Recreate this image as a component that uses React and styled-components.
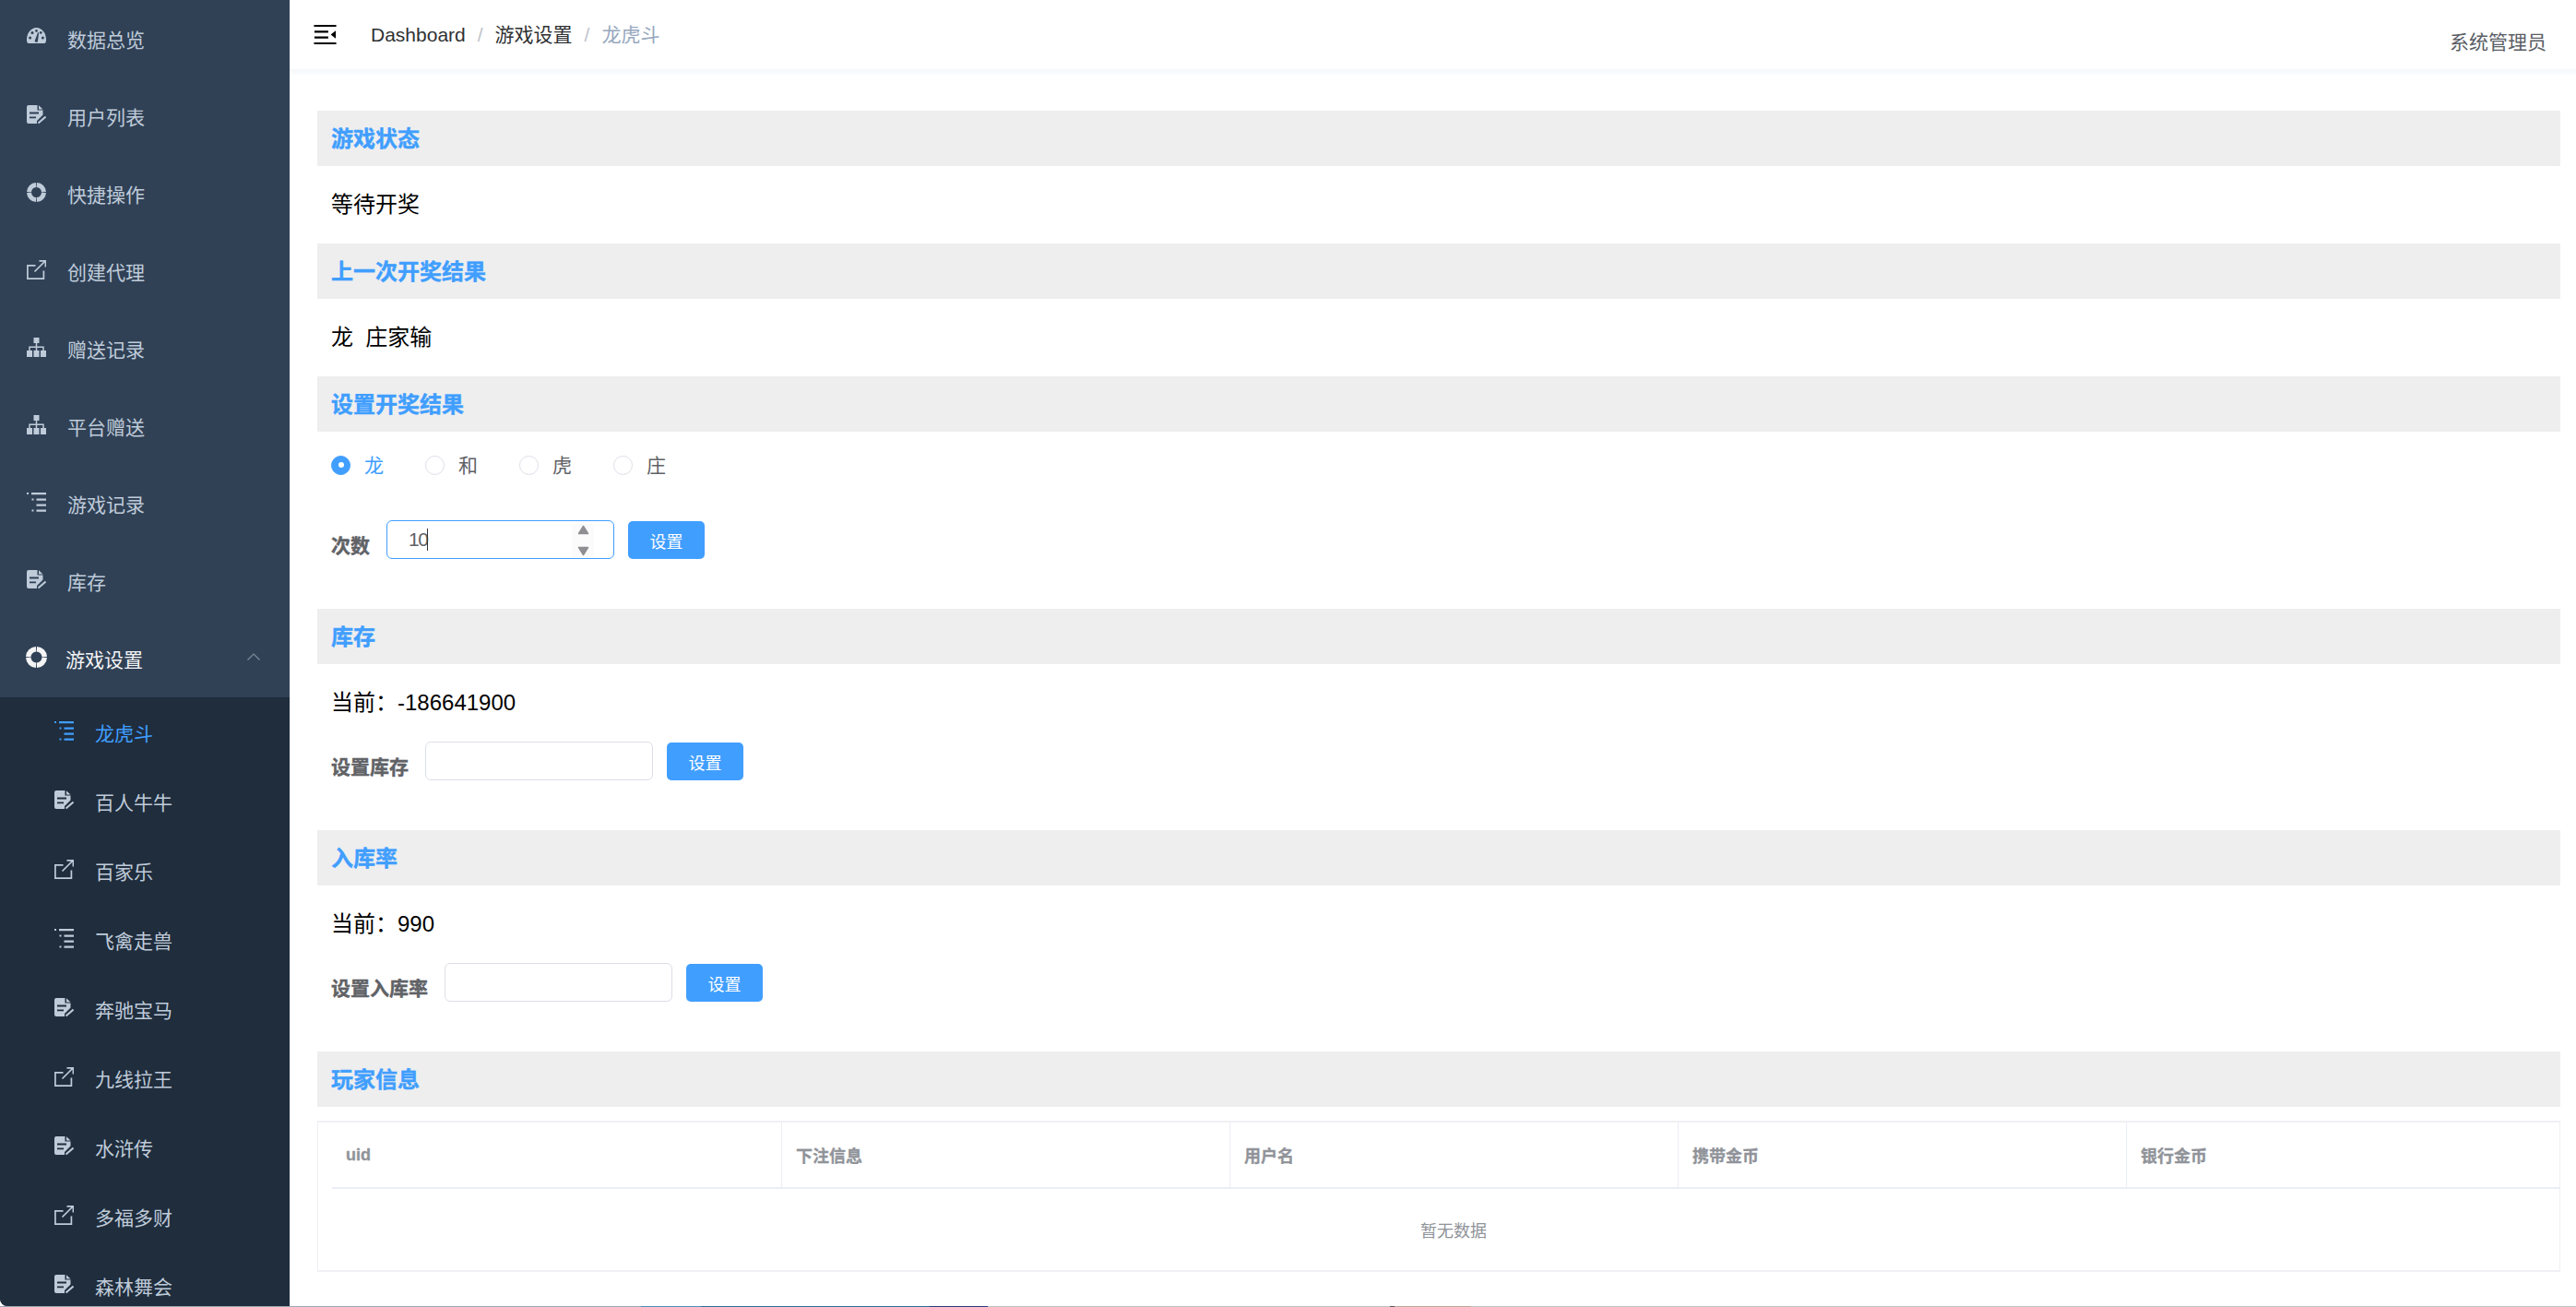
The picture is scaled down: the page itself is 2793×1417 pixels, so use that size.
import React from "react";
import styled, { createGlobalStyle } from "styled-components";

const FONT = `"Liberation Sans", "Noto Sans CJK SC", sans-serif`;

const Global = createGlobalStyle`
  html, body { margin: 0; padding: 0; background: #fff; overflow: hidden; }
  * { box-sizing: border-box; }
  body { font-family: ${FONT}; }
`;

const Page = styled.div`
  width: 2793px;
  height: 1417px;
  display: flex;
  flex-direction: column;
  background: #fff;
`;
const Window = styled.div`
  flex: 1;
  min-height: 0;
  display: flex;
  background: #fff;
`;
const DesktopStrip = styled.div`
  height: 1px;
  background: linear-gradient(to right,
    #9aa7b5 0, #9aa7b5 695px,
    #4a8fc0 695px, #4a8fc0 760px,
    #2d6ca0 760px, #2d6ca0 1008px,
    #2a3a80 1008px, #2a3a80 1071px,
    #c0c0c0 1071px, #c0c0c0 1507px,
    #555 1507px, #555 1512px,
    #b8aa98 1512px, #b8aa98 1595px,
    #c4c4c4 1595px, #c4c4c4 100%);
`;
const Sidebar = styled.nav`
  --nav-bg: #304156;
  width: 314px;
  flex: none;
  background: #304156;
  overflow: hidden;
  border-bottom-left-radius: 8px;
`;
const NavRow = styled.div`
  height: 84px;
  display: flex;
  align-items: center;
  padding-left: ${p => (p.$open ? 28 : 29)}px;
  gap: ${p => (p.$open ? 20 : 23)}px;
  color: ${p => (p.$open ? "#f4f4f5" : "#bfcbd9")};
  font-size: 21px;
  position: relative;
`;
const NavIcon = styled.svg`
  width: ${p => p.$size || 21}px;
  height: ${p => p.$size || 21}px;
  flex: none;
  margin-top: -3px;
  color: inherit;
`;
const NavLabel = styled.span`
  line-height: 30px;
  margin-top: 4px;
`;
const Chevron = styled.svg`
  position: absolute;
  left: 268px;
  top: 36px;
  width: 14px;
  height: 8px;
`;
const SubMenu = styled.div`
  --nav-bg: #1f2d3d;
  background: #1f2d3d;
`;
const SubRow = styled.div`
  height: 75px;
  display: flex;
  align-items: center;
  padding-left: 59px;
  gap: 23px;
  font-size: 21px;
  color: ${p => (p.$active ? "#409eff" : "#bfcbd9")};
`;
const Main = styled.main`
  flex: 1;
  min-width: 0;
`;
const Header = styled.header`
  height: 75px;
  display: flex;
  align-items: center;
  padding-left: 25px;
  position: relative;
  &::after {
    content: "";
    position: absolute;
    left: 0;
    right: 0;
    top: 75px;
    height: 6px;
    background: linear-gradient(to bottom, #f5f7fa, #fbfcfd);
  }
`;
const Hamburger = styled.svg`
  width: 27px;
  height: 27px;
  transform: rotate(180deg);
  flex: none;
  margin-right: 36px;
  margin-top: -1px;
`;
const Crumbs = styled.div`
  display: flex;
  align-items: center;
  font-size: 21px;
  color: #303133;
  line-height: 30px;
`;
const Crumb = styled.span`
  color: ${p => (p.$last ? "#97a8be" : "#303133")};
`;
const Sep = styled.span`
  color: #c0c4cc;
  margin: 0 13px;
  font-size: 21px;
`;
const UserName = styled.div`
  margin-left: auto;
  margin-right: 32px;
  margin-top: 12px;
  font-size: 21px;
  color: #5a5e66;
`;
const Content = styled.div`
  padding: 45px 17px 0 30px;
`;
const SectionBar = styled.h2`
  margin: 0;
  height: 60px;
  background: #eeeeee;
  display: flex;
  align-items: center;
  padding: 0 0 3px 15px;
  font-size: 24px;
  font-weight: 700;
  color: #409eff;
  -webkit-text-stroke: 0.4px #409eff;
`;
const StatusLine = styled.div`
  height: 84px;
  display: flex;
  align-items: center;
  padding: 0 0 6px 15px;
  font-size: 24px;
  color: #000;
  white-space: pre;
`;
const RadioGroup = styled.div`
  height: 72px;
  margin-bottom: 24px;
  display: flex;
  align-items: center;
  padding-left: 15px;
`;
const RadioItem = styled.label`
  width: 102px;
  display: flex;
  align-items: center;
  gap: 15px;
  font-size: 21px;
  color: ${p => (p.$checked ? "#409eff" : "#606266")};
`;
const RadioText = styled.span`
  margin-top: -2px;
`;
const RadioDot = styled.span`
  width: 21px;
  height: 21px;
  border-radius: 50%;
  flex: none;
  display: flex;
  align-items: center;
  justify-content: center;
  border: 1.5px solid ${p => (p.$checked ? "#409eff" : "#dcdfe6")};
  background: ${p => (p.$checked ? "#409eff" : "#fff")};
  &::after {
    content: "";
    width: 6px;
    height: 6px;
    border-radius: 50%;
    background: ${p => (p.$checked ? "#fff" : "transparent")};
  }
`;
const FormRow = styled.div`
  height: 42px;
  margin-bottom: 54px;
  padding-left: 15px;
  display: flex;
  align-items: flex-end;
`;
const FieldLabel = styled.span`
  font-size: 21px;
  font-weight: 700;
  color: #606266;
  -webkit-text-stroke: 0.4px #606266;
  line-height: 30px;
  margin-right: 18px;
  margin-bottom: -1px;
`;
const FieldWrap = styled.div`
  position: relative;
  width: 247px;
  height: 42px;
  margin-right: 15px;
`;
const Field = styled.input`
  width: 100%;
  height: 100%;
  border: 1.5px solid ${p => (p.$focus ? "#409eff" : "#dcdfe6")};
  border-radius: 6px;
  outline: none;
  padding: 0 23px;
  font-family: ${FONT};
  font-size: 21px;
  letter-spacing: -1.5px;
  color: #606266;
  background: #fff;
`;
const Caret = styled.span`
  position: absolute;
  left: 43.5px;
  top: 9px;
  width: 1px;
  height: 24px;
  background: #333;
`;
const Spinner = styled.div`
  position: absolute;
  right: 22px;
  top: 4px;
  bottom: 2px;
  width: 24px;
  background: #fbfbfb;
  display: flex;
  flex-direction: column;
  justify-content: space-between;
  align-items: center;
  padding: 1px 0;
`;
const SpinArrow = styled.svg`
  width: 13px;
  height: 11px;
  fill: #8e8e93;
  stroke: #8e8e93;
  stroke-width: 1.5;
  stroke-linejoin: round;
`;
const SetButton = styled.button`
  width: 83px;
  height: 41px;
  border: 0;
  border-radius: 5px;
  background: #409eff;
  color: #fff;
  font-family: ${FONT};
  font-size: 18px;
  padding: 0;
`;
const TableBox = styled.div`
  margin-top: 15px;
  height: 164px;
  border: 2px solid #f0f0f5;
  border-left-width: 1px;
  border-right-width: 1px;
`;
const TableHead = styled.div`
  margin-left: 15px;
  height: 72px;
  display: grid;
  grid-template-columns: 488px 486px 486px 486px 1fr;
  border-bottom: 2px solid #ebeef5;
`;
const HeadCell = styled.div`
  display: flex;
  align-items: center;
  padding: 0 15px;
  font-size: 18px;
  font-weight: 700;
  color: #909399;
  -webkit-text-stroke: 0.3px #909399;
  border-right: 1px solid #ebeef5;
  &:last-child { border-right: 0; }
`;
const EmptyRow = styled.div`
  height: 87px;
  padding-left: 32px;
  display: flex;
  align-items: center;
  justify-content: center;
  font-size: 18px;
  color: #909399;
`;

const ICONS = {
  gauge: (
    <>
      <path fill="currentColor" d="M2 17Q0 17 0 13C0 5.5 5 0 10.5 0S21 5.5 21 13Q21 17 19 17Z" />
      <g fill="var(--nav-bg)">
        <circle cx="3.6" cy="11" r="1.5" />
        <circle cx="6" cy="5.4" r="1.5" />
        <circle cx="10.5" cy="3.4" r="1.3" />
        <circle cx="17.4" cy="11" r="1.5" />
        <circle cx="15.3" cy="5.4" r="1.3" />
        <path d="M9 13.5 12.2 5l1 .3-1.2 8.6a1.6 1.6 0 1 1-3-.4Z" />
      </g>
    </>
  ),
  file: (
    <>
      <path fill="currentColor" d="M2 0H11.5V5.5H17.5V10.5L11 17V20H2Q0 20 0 18V2Q0 0 2 0ZM13 .3 17.5 4.5H13Z" />
      <path stroke="var(--nav-bg)" strokeWidth="1.8" fill="none" d="M3 8.5H13M3 13.3H10" />
      <path stroke="currentColor" strokeWidth="2" fill="none" d="M12.5 19.5 20.5 12.5" />
    </>
  ),
  ring: (
    <circle cx="10.5" cy="10.5" r="8" fill="none" stroke="currentColor" strokeWidth="5" pathLength="100" strokeDasharray="23.4 1.6" strokeDashoffset="-0.8" />
  ),
  link: (
    <path fill="none" stroke="currentColor" strokeWidth="1.7" d="M9.5 5.8H.9V20.1H18.4V11.5M8.5 12.5 20 1M13.5.9H20.4V7.5" />
  ),
  tree: (
    <>
      <path fill="currentColor" d="M7.5 0H13.5V6H7.5ZM0 14H6V21H0ZM7.5 14H13.5V21H7.5ZM15 14H21V21H15Z" />
      <path stroke="currentColor" strokeWidth="1.5" fill="none" d="M10.5 6V14M3 14V10.2H18V14" />
    </>
  ),
  list: (
    <path fill="currentColor" d="M0 0H2V2H0ZM5 0H21V2.3H5ZM5.5 6.5H7.5V8.5H5.5ZM10.5 6.5H21V8.8H10.5ZM10.5 12.5H21V14.8H10.5ZM5.5 18.5H7.5V20.5H5.5ZM10.5 18.5H21V20.8H10.5Z" />
  ),
};

const TOP = [
  ["gauge", "数据总览"],
  ["file", "用户列表"],
  ["ring", "快捷操作"],
  ["link", "创建代理"],
  ["tree", "赠送记录"],
  ["tree", "平台赠送"],
  ["list", "游戏记录"],
  ["file", "库存"],
];
const SUB = [
  ["list", "龙虎斗", true],
  ["file", "百人牛牛"],
  ["link", "百家乐"],
  ["list", "飞禽走兽"],
  ["file", "奔驰宝马"],
  ["link", "九线拉王"],
  ["file", "水浒传"],
  ["link", "多福多财"],
  ["file", "森林舞会"],
];

const Icon = ({ name, size }) => (
  <NavIcon viewBox="0 0 21 21" $size={size}>{ICONS[name]}</NavIcon>
);

const Stock = ({ label }) => (
  <FormRow>
    <FieldLabel>{label}</FieldLabel>
    <FieldWrap><Field defaultValue="" /></FieldWrap>
    <SetButton>设置</SetButton>
  </FormRow>
);

export default function App() {
  return (
    <Page>
      <Global />
      <Window>
        <Sidebar>
          {TOP.map(([icon, text]) => (
            <NavRow key={text}>
              <Icon name={icon} />
              <NavLabel>{text}</NavLabel>
            </NavRow>
          ))}
          <NavRow $open>
            <Icon name="ring" size={23} />
            <NavLabel>游戏设置</NavLabel>
            <Chevron viewBox="0 0 14 8">
              <path d="M.5 7.5 7 1l6.5 6.5" fill="none" stroke="#7f8a98" strokeWidth="1.2" />
            </Chevron>
          </NavRow>
          <SubMenu>
            {SUB.map(([icon, text, active]) => (
              <SubRow key={text} $active={active}>
                <Icon name={icon} />
                <NavLabel>{text}</NavLabel>
              </SubRow>
            ))}
          </SubMenu>
        </Sidebar>
        <Main>
          <Header>
            <Hamburger viewBox="64 64 896 896">
              <path d="M408 442h480c4.4 0 8-3.6 8-8v-56c0-4.4-3.6-8-8-8H408c-4.4 0-8 3.6-8 8v56c0 4.4 3.6 8 8 8zm-8 204c0 4.4 3.6 8 8 8h480c4.4 0 8-3.6 8-8v-56c0-4.4-3.6-8-8-8H408c-4.4 0-8 3.6-8 8v56zm504-486H120c-4.4 0-8 3.6-8 8v56c0 4.4 3.6 8 8 8h784c4.4 0 8-3.6 8-8v-56c0-4.4-3.6-8-8-8zm0 632H120c-4.4 0-8 3.6-8 8v56c0 4.4 3.6 8 8 8h784c4.4 0 8-3.6 8-8v-56c0-4.4-3.6-8-8-8zM142.4 642.1L298.7 519a8.84 8.84 0 0 0 0-13.9L142.4 381.9c-5.8-4.6-14.4-.5-14.4 6.9v246.3a8.9 8.9 0 0 0 14.4 7z" />
            </Hamburger>
            <Crumbs>
              <Crumb>Dashboard</Crumb>
              <Sep>/</Sep>
              <Crumb>游戏设置</Crumb>
              <Sep>/</Sep>
              <Crumb $last>龙虎斗</Crumb>
            </Crumbs>
            <UserName>系统管理员</UserName>
          </Header>
          <Content>
            <SectionBar>游戏状态</SectionBar>
            <StatusLine>等待开奖</StatusLine>
            <SectionBar>上一次开奖结果</SectionBar>
            <StatusLine>龙  庄家输</StatusLine>
            <SectionBar>设置开奖结果</SectionBar>
            <RadioGroup>
              {["龙", "和", "虎", "庄"].map((t, i) => (
                <RadioItem key={t} $checked={i === 0}>
                  <RadioDot $checked={i === 0} />
                  <RadioText>{t}</RadioText>
                </RadioItem>
              ))}
            </RadioGroup>
            <FormRow>
              <FieldLabel>次数</FieldLabel>
              <FieldWrap>
                <Field $focus defaultValue="10" />
                <Caret />
                <Spinner>
                  <SpinArrow viewBox="0 0 13 11"><path d="M6.5 1.5 11.5 9.5H1.5Z" /></SpinArrow>
                  <SpinArrow viewBox="0 0 13 11"><path d="M1.5 1.5H11.5L6.5 9.5Z" /></SpinArrow>
                </Spinner>
              </FieldWrap>
              <SetButton>设置</SetButton>
            </FormRow>
            <SectionBar>库存</SectionBar>
            <StatusLine>当前：-186641900</StatusLine>
            <Stock label="设置库存" />
            <SectionBar>入库率</SectionBar>
            <StatusLine>当前：990</StatusLine>
            <Stock label="设置入库率" />
            <SectionBar>玩家信息</SectionBar>
            <TableBox>
              <TableHead>
                {["uid", "下注信息", "用户名", "携带金币", "银行金币"].map(h => (
                  <HeadCell key={h}>{h}</HeadCell>
                ))}
              </TableHead>
              <EmptyRow>暂无数据</EmptyRow>
            </TableBox>
          </Content>
        </Main>
      </Window>
      <DesktopStrip />
    </Page>
  );
}
